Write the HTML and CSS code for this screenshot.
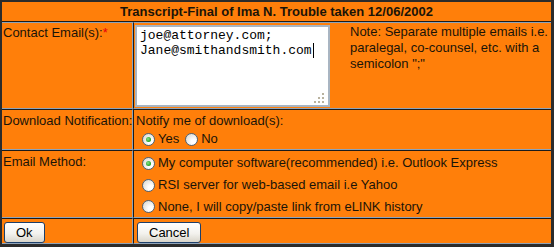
FILE: index.html
```html
<!DOCTYPE html>
<html>

<head>
  <title>Transcript Final</title>
  <link rel="stylesheet" href="styles.css">
</head>

<body>

  <table class="form">
    <colgroup>
      <col class="col-label">
      <col class="col-field">
    </colgroup>
    <tr>
      <th colspan="2">Transcript-Final of Ima N. Trouble taken 12/06/2002</th>
    </tr>
    <tr class="first">
      <td class="label">Contact Email(s):<span class="req">*</span></td>
      <td class="field emails">
        <div class="textbox">joe@attorney.com;<br>Jane@smithandsmith.com<span class="caret"></span></div>
        <div class="note">Note: Separate multiple emails i.e. paralegal, co-counsel, etc. with a semicolon ";"</div>
      </td>
    </tr>
    <tr>
      <td class="label">Download Notification:</td>
      <td class="field notify">
        <div>Notify me of download(s):</div>
        <div class="inline">
          <span class="radio checked"></span>Yes
          <span class="radio"></span>No
        </div>
      </td>
    </tr>
    <tr>
      <td class="label">Email Method:</td>
      <td class="field options">
        <div class="opt"><span class="radio checked"></span>My computer software(recommended) i.e. Outlook Express</div>
        <div class="opt"><span class="radio"></span>RSI server for web-based email i.e Yahoo</div>
        <div class="opt"><span class="radio"></span>None, I will copy/paste link from eLINK history</div>
      </td>
    </tr>
    <tr>
      <td class="label buttons"><button class="btn">Ok</button></td>
      <td class="field buttons"><button class="btn cancel">Cancel</button></td>
    </tr>
  </table>

</body>

</html>
```

FILE: styles.css
```css
body {
  margin: 0;
  background: #2b2b2b;
  font: 13px/16px "Liberation Sans", Arial, sans-serif;
  color: #1a1408;
}

/* The whole form is one orange table */
.form {
  margin: 2px 0 0 2px;
  width: 549px;
  table-layout: fixed;
  border-collapse: separate;
  border-spacing: 0;
  background: #ff7f0a;
}

.col-label {
  width: 131px;
}

th {
  padding: 1px 2px;
  line-height: 17px;
  font-weight: bold;
  text-align: center;
  border-bottom: 1px solid #1b1b1b;
}

/* Inset style cell borders */
td {
  padding: 3px 2px 2px;
  vertical-align: top;
  border-top: 1px solid #1b1b1b;
  border-bottom: 1px solid #8fa3b8;
}

tr.first td {
  border-top-color: #8fa3b8;
  padding-top: 2px;
  padding-bottom: 1px;
}

td.label {
  padding-left: 1px;
  padding-right: 0;
  white-space: nowrap;
  border-right: 1px solid #8fa3b8;
}

td.field {
  border-left: 1px solid #1b1b1b;
}

.req {
  color: #e8000b;
}

/* Email box and note */
.emails {
  display: flex;
  gap: 20px;
}

td.emails {
  padding-left: 1px;
}

.textbox {
  position: relative;
  flex: none;
  width: 195px;
  height: 82px;
  box-sizing: border-box;
  padding: 1px 3px;
  border: 2px solid #a9b5c2;
  background: #fff;
  font: 13px/15px "Liberation Mono", "Courier New", monospace;
  color: #000;
}

.caret {
  display: inline-block;
  width: 1px;
  height: 15px;
  margin-left: 1px;
  vertical-align: top;
  background: #000;
}

/* resize grip in the corner */
.textbox::after {
  content: "";
  position: absolute;
  right: 4px;
  bottom: 2px;
  width: 2px;
  height: 2px;
  background: #b9b29e;
  box-shadow: -4px 0 #b9b29e, -8px 0 #b9b29e, 0 -4px #b9b29e, -4px -4px #b9b29e, 0 -8px #b9b29e;
}

.note {
  width: 202px;
  margin-top: -1px;
}

/* Radios */
.notify {
  padding-bottom: 0;
}

.inline {
  display: flex;
  align-items: center;
  height: 20px;
}

.radio {
  position: relative;
  display: inline-block;
  flex: none;
  width: 13px;
  height: 13px;
  margin: 0 3px 0 6px;
  box-sizing: border-box;
  border: 1px solid #4d6278;
  border-radius: 50%;
  background: radial-gradient(circle at 70% 70%, #ffffff 20%, #d9d7cf 90%);
}

.radio.checked::after {
  content: "";
  position: absolute;
  left: 3px;
  top: 3px;
  width: 5px;
  height: 5px;
  border-radius: 50%;
  background: radial-gradient(circle at 40% 40%, #8be28b, #1f9e1f 70%);
}

td.options {
  padding-top: 1px;
  padding-bottom: 0;
}

.opt {
  display: flex;
  align-items: center;
  height: 22px;
}

.opt:last-child {
  height: 21px;
}

/* Buttons */
td.buttons {
  padding: 3px 2px 0;
}

td.field.buttons {
  padding-left: 3px;
}

.btn {
  display: block;
  height: 21px;
  margin: 0;
  padding: 0 11px;
  border: 1px solid #1d3f6a;
  border-radius: 3px;
  background: linear-gradient(#ffffff, #f3f2ee 55%, #d9d5ca);
  font: 13px "Liberation Sans", Arial, sans-serif;
  color: #000;
}
```
